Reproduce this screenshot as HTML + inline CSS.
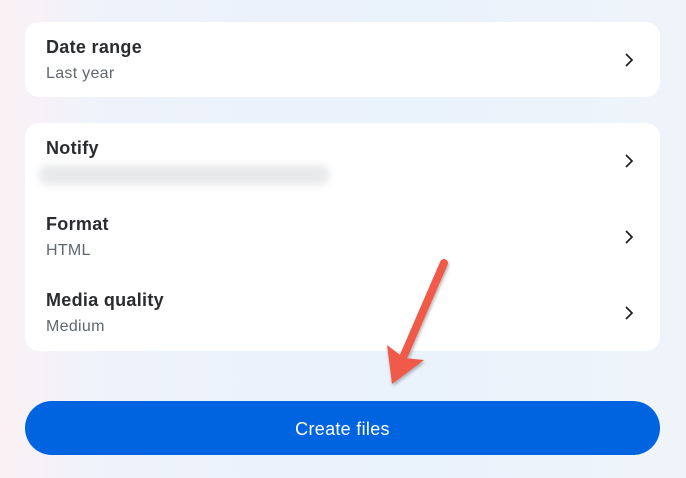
<!DOCTYPE html>
<html><head><style>
body{margin:0;width:686px;height:478px;overflow:hidden;background:linear-gradient(90deg,#fbf1f4 0%,#eef3fb 15%,#eaf2fc 60%,#eef4fa 100%);font-family:"Liberation Sans",sans-serif;position:relative}
.card{position:absolute;left:25px;width:635px;background:#fff;border-radius:14px}
.t{position:absolute;left:21px;font-size:18px;font-weight:bold;color:#2a2c30;letter-spacing:0.3px}
.s{position:absolute;left:21px;font-size:16px;color:#606770;letter-spacing:0.3px}
.ch{position:absolute;left:598px}
.btn{position:absolute;left:25px;top:401px;width:635px;height:54px;background:#0064e0;border-radius:27px;color:#fff;font-size:18px;text-align:center;line-height:56px;letter-spacing:0.3px}
</style></head><body>
<div class="card" style="top:22px;height:75px">
<div class="t" style="top:15px">Date range</div>
<div class="s" style="top:43px">Last year</div>
<svg class="ch" style="top:30px" width="12" height="16"><path d="M3 2l6 6-6 6" stroke="#1c1e21" stroke-width="1.7" fill="none"/></svg>
</div>
<div class="card" style="top:123px;height:228px">
<div class="t" style="top:15px">Notify</div>
<div style="position:absolute;left:14px;top:42px;width:290px;height:20px;background:#e8e9eb;filter:blur(4px);border-radius:8px"></div>
<svg class="ch" style="top:30px" width="12" height="16"><path d="M3 2l6 6-6 6" stroke="#1c1e21" stroke-width="1.7" fill="none"/></svg>
<div class="t" style="top:91px">Format</div>
<div class="s" style="top:119px">HTML</div>
<svg class="ch" style="top:106px" width="12" height="16"><path d="M3 2l6 6-6 6" stroke="#1c1e21" stroke-width="1.7" fill="none"/></svg>
<div class="t" style="top:167px">Media quality</div>
<div class="s" style="top:195px">Medium</div>
<svg class="ch" style="top:182px" width="12" height="16"><path d="M3 2l6 6-6 6" stroke="#1c1e21" stroke-width="1.7" fill="none"/></svg>
</div>
<div class="btn">Create files</div>
<svg style="position:absolute;left:0;top:0" width="686" height="478">
<defs><filter id="f"><feDropShadow dx="1" dy="2" stdDeviation="1.5" flood-opacity="0.3"/></filter></defs>
<g filter="url(#f)">
<line x1="444" y1="263" x2="402" y2="360" stroke="#f05a4a" stroke-width="8" stroke-linecap="round"/>
<path d="M387 345 L392 384 L424 360 L404 358 Z" fill="#f05a4a"/>
</g>
</svg>
</body></html>
